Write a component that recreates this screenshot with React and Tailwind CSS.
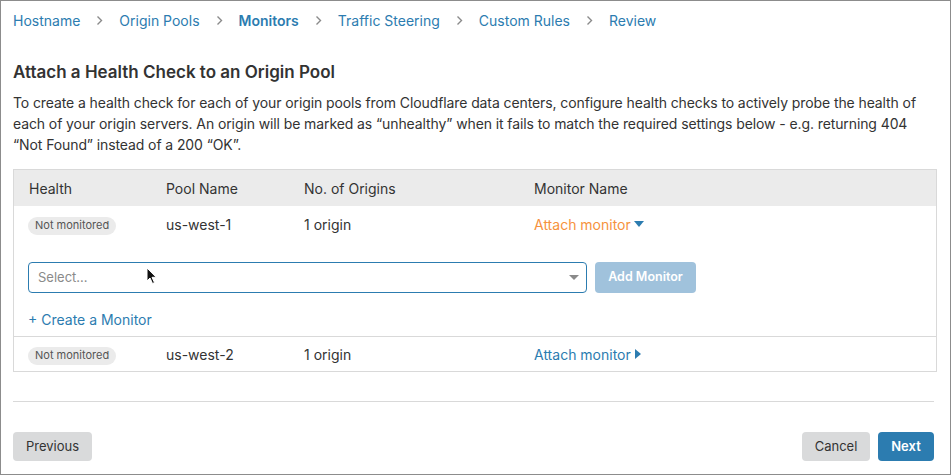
import React from 'react';

const steps = ['Hostname', 'Origin Pools', 'Monitors', 'Traffic Steering', 'Custom Rules', 'Review'];

function Chevron() {
  return (
    <svg width="7" height="11" viewBox="0 0 7 11" className="mx-[16px] shrink-0">
      <path d="M1.5 1.5 L5.5 5.5 L1.5 9.5" fill="none" stroke="#8a8a8a" strokeWidth="1.4" />
    </svg>
  );
}

function Badge() {
  return (
    <span className="inline-flex h-[18px] items-center rounded-full bg-[#ebebeb] px-[7px] text-[11px] text-[#555]">Not monitored</span>
  );
}

export default function App() {
  return (
    <div className="h-[475px] w-[951px] overflow-hidden border border-[#8c8c8c] bg-white font-['Inter','Liberation_Sans',sans-serif] text-[#333]">
      <div className="flex h-[39px] items-center pl-[12px] text-[14px] text-[#2c7cb0]">
        {steps.map((s, i) => (
          <React.Fragment key={s}>
            {i > 0 && <Chevron />}
            <span className={s === 'Monitors' ? 'font-semibold' : ''}>{s}</span>
          </React.Fragment>
        ))}
      </div>

      <div className="px-[12px]">
        <h1 className="mt-[20px] text-[17px] font-semibold leading-[24px] text-[#333]">Attach a Health Check to an Origin Pool</h1>
        <p className="mt-[8px] text-[14px] leading-[21px] tracking-[-0.1px] text-[#333]">
          To create a health check for each of your origin pools from Cloudflare data centers, configure health checks to actively probe the health of each of your origin servers. An origin will be marked as “unhealthy” when it fails to match the required settings below - e.g. returning 404 “Not Found” instead of a 200 “OK”.
        </p>

        <div className="mt-[14px] w-[924px] border border-[#d9d9d9] text-[14px]">
          <div className="flex h-[36px] items-center bg-[#ebebeb] text-[#333]">
            <div className="w-[152px] pl-[15px]">Health</div>
            <div className="w-[138px]">Pool Name</div>
            <div className="w-[230px]">No. of Origins</div>
            <div>Monitor Name</div>
          </div>
          <div className="flex h-[36px] items-center">
            <div className="w-[152px] pl-[14px]"><Badge /></div>
            <div className="w-[138px]">us-west-1</div>
            <div className="w-[230px]">1 origin</div>
            <div className="flex items-center text-[#f6923d]">
              Attach monitor
              <svg width="10" height="6" viewBox="0 0 10 6" className="ml-[3px]"><path d="M0 0 H10 L5 6 Z" fill="#2c7cb0" /></svg>
            </div>
          </div>
          <div className="px-[14px] pb-[6px] pt-[20px]">
            <div className="flex items-center">
              <div className="relative flex h-[31px] w-[559px] items-center rounded-[4px] border border-[#2c7cb0] pl-[9px] text-[13px] text-[#8a8a8a]">
                Select...
                <svg width="10" height="5" viewBox="0 0 10 5" className="absolute right-[7px] top-[12px]"><path d="M0 0 H10 L5 5 Z" fill="#8a8a8a" /></svg>
                <svg width="12" height="18" viewBox="0 0 12 18" className="absolute left-[117px] top-[4px]">
                  <path d="M1 1 L1 14 L4 11 L6.5 16.5 L8.5 15.6 L6 10.3 L10.2 10.3 Z" fill="#111" stroke="#fff" strokeWidth="1" />
                </svg>
              </div>
              <button className="ml-[8px] h-[31px] w-[101px] rounded-[4px] bg-[#a0c2dc] text-[12.5px] font-semibold text-white">Add Monitor</button>
            </div>
            <div className="mt-[16px] text-[14px] text-[#2c7cb0]">+ Create a Monitor</div>
          </div>
          <div className="flex h-[35px] items-center border-t border-[#d9d9d9]">
            <div className="w-[152px] pl-[14px]"><Badge /></div>
            <div className="w-[138px]">us-west-2</div>
            <div className="w-[230px]">1 origin</div>
            <div className="flex items-center text-[#2c7cb0]">
              Attach monitor
              <svg width="6" height="10" viewBox="0 0 6 10" className="ml-[4px]"><path d="M0 0 V10 L6 5 Z" fill="#2c7cb0" /></svg>
            </div>
          </div>
        </div>

        <div className="mt-[29px] w-[921px] border-t border-[#d9d9d9]" />

        <div className="mt-[30px] flex w-[921px] items-center justify-between text-[13px]">
          <button className="h-[29px] w-[79px] rounded-[4px] bg-[#d9dadb] text-[#333]">Previous</button>
          <div className="flex gap-[8px]">
            <button className="h-[29px] w-[68px] rounded-[4px] bg-[#d9dadb] text-[#333]">Cancel</button>
            <button className="h-[29px] w-[56px] rounded-[4px] bg-[#2c7cb0] font-semibold text-white">Next</button>
          </div>
        </div>
      </div>
    </div>
  );
}
